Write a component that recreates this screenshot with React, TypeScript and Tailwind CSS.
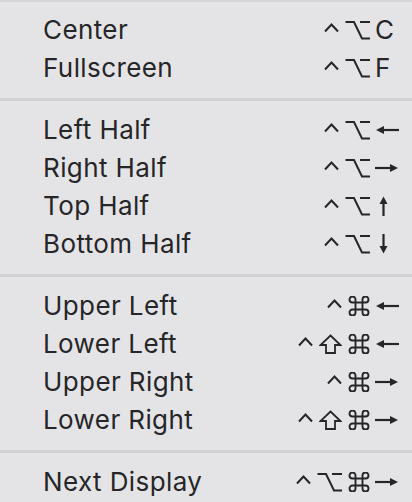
import React from 'react';

type Mod = 'ctrl' | 'opt' | 'shift' | 'cmd';
type Key = 'C' | 'F' | 'left' | 'right' | 'up' | 'down';

interface Item {
  label: string;
  mods: Mod[];
  keyName: Key;
}

const groups: Item[][] = [
  [
    { label: 'Center', mods: ['ctrl', 'opt'], keyName: 'C' },
    { label: 'Fullscreen', mods: ['ctrl', 'opt'], keyName: 'F' },
  ],
  [
    { label: 'Left Half', mods: ['ctrl', 'opt'], keyName: 'left' },
    { label: 'Right Half', mods: ['ctrl', 'opt'], keyName: 'right' },
    { label: 'Top Half', mods: ['ctrl', 'opt'], keyName: 'up' },
    { label: 'Bottom Half', mods: ['ctrl', 'opt'], keyName: 'down' },
  ],
  [
    { label: 'Upper Left', mods: ['ctrl', 'cmd'], keyName: 'left' },
    { label: 'Lower Left', mods: ['ctrl', 'shift', 'cmd'], keyName: 'left' },
    { label: 'Upper Right', mods: ['ctrl', 'cmd'], keyName: 'right' },
    { label: 'Lower Right', mods: ['ctrl', 'shift', 'cmd'], keyName: 'right' },
  ],
  [{ label: 'Next Display', mods: ['ctrl', 'opt', 'cmd'], keyName: 'right' }],
];

const stroke = {
  fill: 'none',
  stroke: 'currentColor',
  strokeWidth: 2,
  strokeLinecap: 'butt' as const,
  strokeLinejoin: 'miter' as const,
};

const ModIcon = ({ mod }: { mod: Mod }) => {
  if (mod === 'ctrl') {
    return (
      <svg width="15" height="20" viewBox="0 0 15 20">
        <path d="M1 11.5 L7.5 4.5 L14 11.5" {...stroke} />
      </svg>
    );
  }
  if (mod === 'opt') {
    return (
      <svg width="25" height="20" viewBox="0 0 25 20">
        <path d="M0.5 2 H9 L17 18.5 H25 M15 2 H25" {...stroke} />
      </svg>
    );
  }
  if (mod === 'shift') {
    return (
      <svg width="23" height="20" viewBox="0 0 23 20">
        <path d="M11.5 1.5 L21.5 11 H16 V19 H7 V11 H1.5 Z" {...stroke} strokeWidth={1.8} />
      </svg>
    );
  }
  return (
    <svg width="22" height="20" viewBox="0 0 22 20">
      <path
        d="M14.5 3.5 V16.5 A3 3 0 1 0 17.5 13.5 H4.5 A3 3 0 1 0 7.5 16.5 V3.5 A3 3 0 1 0 4.5 6.5 H17.5 A3 3 0 1 0 14.5 3.5"
        {...stroke}
        strokeWidth={1.9}
      />
    </svg>
  );
};

const KeyIcon = ({ k }: { k: Key }) => {
  if (k === 'C' || k === 'F') return <span className="leading-none">{k}</span>;
  if (k === 'left') {
    return (
      <svg width="24" height="20" viewBox="0 0 24 20">
        <polygon points="1,10 9,6 9,14" fill="currentColor" />
        <path d="M8 10 H24" {...stroke} strokeWidth={2.2} />
      </svg>
    );
  }
  if (k === 'right') {
    return (
      <svg width="24" height="20" viewBox="0 0 24 20">
        <polygon points="23,10 15,6 15,14" fill="currentColor" />
        <path d="M0 10 H16" {...stroke} strokeWidth={2.2} />
      </svg>
    );
  }
  if (k === 'up') {
    return (
      <svg width="17" height="20" viewBox="0 0 17 20">
        <polygon points="8.5,0.5 4.5,8 12.5,8" fill="currentColor" />
        <path d="M8.5 7 V20" {...stroke} strokeWidth={2.2} />
      </svg>
    );
  }
  return (
    <svg width="17" height="20" viewBox="0 0 17 20">
      <polygon points="8.5,19.5 4.5,12 12.5,12" fill="currentColor" />
      <path d="M8.5 0 V13" {...stroke} strokeWidth={2.2} />
    </svg>
  );
};

const Row = ({ item }: { item: Item }) => (
  <div className="flex h-[38px] items-center pl-[43px] pr-[13px]">
    <span className="flex-1 text-[26px] leading-[38px] tracking-[0.4px]">{item.label}</span>
    <div className="flex items-center gap-[6px]">
      {item.mods.map((m, i) => (
        <ModIcon key={i} mod={m} />
      ))}
    </div>
    <div className="ml-[5px] flex w-[24px] items-center text-[26px]">
      <KeyIcon k={item.keyName} />
    </div>
  </div>
);

const Separator = () => (
  <div className="flex h-[24px] items-center">
    <div className="h-[3px] w-full bg-[#d3d3d5]" />
  </div>
);

export default function App() {
  return (
    <div
      className="h-[502px] w-[412px] overflow-hidden bg-[#e4e4e6] text-[#262628]"
      style={{ fontFamily: 'Inter, "Liberation Sans", sans-serif' }}
    >
      <div className="h-[2px] bg-[#d6d6d8]" />
      <div className="pt-[9px]">
        {groups.map((g, gi) => (
          <div key={gi}>
            {gi > 0 && <Separator />}
            {g.map((item) => (
              <Row key={item.label} item={item} />
            ))}
          </div>
        ))}
      </div>
    </div>
  );
}
